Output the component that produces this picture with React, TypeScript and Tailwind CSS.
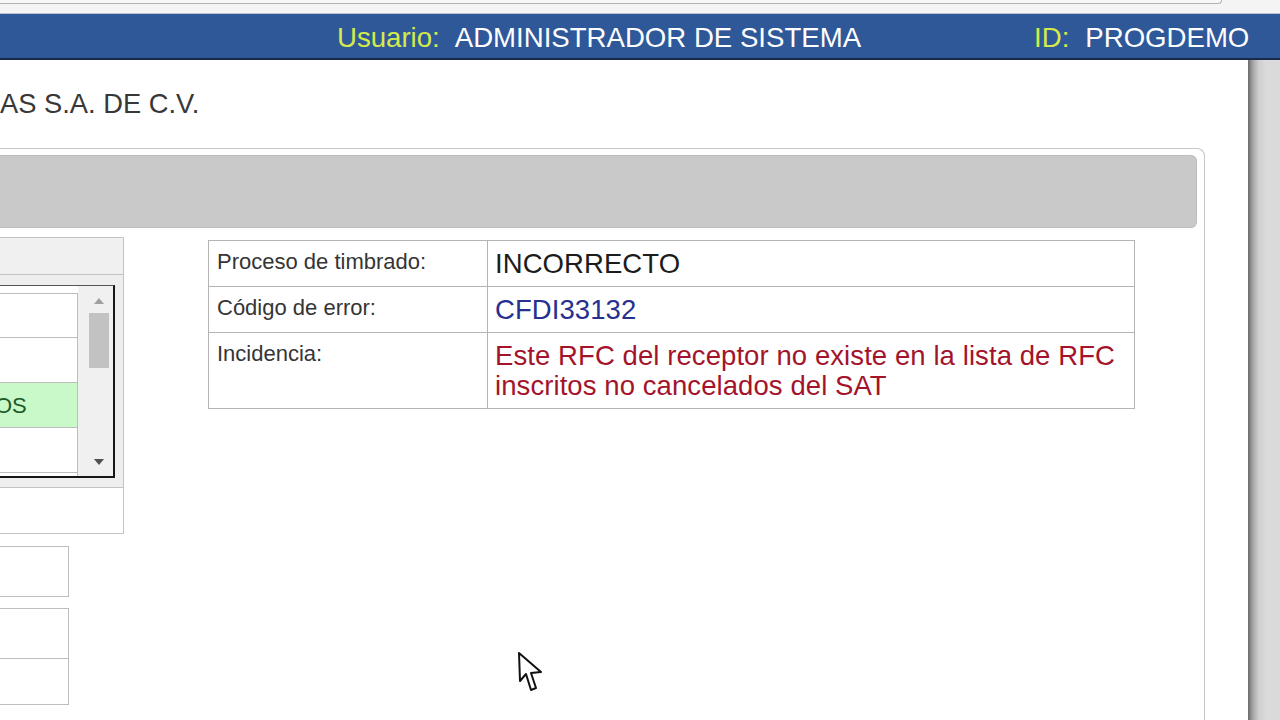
import React from "react";

type Row = { label: string; value: string; tone: string };

const rows: Row[] = [
  { label: "Proceso de timbrado:", value: "INCORRECTO", tone: "text-[#1c1c1c]" },
  { label: "Código de error:", value: "CFDI33132", tone: "text-[#27308f]" },
  {
    label: "Incidencia:",
    value: "Este RFC del receptor no existe en la lista de RFC inscritos no cancelados del SAT",
    tone: "text-[#a3142b]",
  },
];

function ListBox() {
  const items = ["", "", "OS", "", ""];
  return (
    <div className="flex h-[193px] border-t border-r-2 border-b-2 border-t-[#555] border-r-[#161616] border-b-[#161616] bg-white">
      <div className="w-[78px] overflow-hidden pt-[7px]">
        {items.map((it, i) => (
          <div
            key={i}
            className={
              "flex h-[45px] items-center border-r border-b border-[#bdbdbd] text-[22px] text-[#1e5a28] " +
              (i === 0 ? "border-t " : "") +
              (it ? "bg-[#c9f9c9]" : "bg-white")
            }
          >
            {it && <span className="ml-[-5px]">{it}</span>}
          </div>
        ))}
      </div>
      <div className="flex w-[35px] flex-col items-center bg-[#f0f0f0] pt-[11px] pb-[10px]">
        <svg width="12" height="8" viewBox="0 0 12 8" className="ml-[7px]">
          <path d="M6 1 L11 7 L1 7 Z" fill="#a0a0a0" />
        </svg>
        <div className="mt-[8px] ml-[6px] h-[55px] w-[20px] bg-[#c2c2c2]" />
        <div className="flex-1" />
        <svg width="12" height="8" viewBox="0 0 12 8" className="ml-[7px]">
          <path d="M1 1 L11 1 L6 7 Z" fill="#505050" />
        </svg>
      </div>
    </div>
  );
}

export default function App() {
  return (
    <div className="relative h-[720px] w-[1280px] overflow-hidden bg-[#d6d6d6] font-['Liberation_Sans',Arial,sans-serif]">
      {/* browser-ish strip */}
      <div className="h-[14px] border-b border-[#b9c3d4] bg-[#f4f4f4]">
        <div className="h-[4px] w-[1222px] rounded-br-[4px] border-r border-b border-[#b3b3b3] bg-[#f8f8f8]" />
      </div>

      {/* user bar */}
      <div className="flex h-[46px] items-center border-b-2 border-[#172a4c] bg-[#2f5899] pt-[3px] pl-[337px] text-[27.6px] leading-none text-white">
        <span className="text-[#d5ea4a]">Usuario:</span>
        <span className="ml-[15px]">ADMINISTRADOR DE SISTEMA</span>
        <span className="ml-[173px] text-[#d5ea4a]">ID:</span>
        <span className="ml-[16px]">PROGDEMO</span>
      </div>

      <div className="flex h-[660px]">
        <main className="flex w-[1248px] flex-col bg-white">
          <div className="h-[88px] pt-[28px] text-[27.3px] leading-[32px] text-[#383838]">AS S.A. DE C.V.</div>

          <section className="mr-[43px] flex-1 rounded-tr-[8px] border-t border-r border-[#c6c6c6] pt-[6px] pr-[7px]">
            <div className="h-[73px] rounded-r-[6px] border border-l-0 border-[#bcbcbc] bg-[#c9c9c9]" />

            <div className="mt-[9px] flex items-start">
              <div className="w-[124px]">
                <div className="border-t border-r border-b border-[#c4c4c4]">
                  <div className="h-[37px] border-b border-[#c4c4c4] bg-[#f0f0f0]" />
                  <div className="h-[212px] bg-[#eeeeee] pt-[10px] pr-[8px]">
                    <ListBox />
                  </div>
                  <div className="h-[46px] border-t border-[#c4c4c4] bg-white" />
                </div>
                <div className="mt-[12px] h-[51px] w-[69px] border border-l-0 border-[#bdbdbd]" />
                <div className="mt-[11px] w-[69px] border border-l-0 border-[#bdbdbd]">
                  <div className="h-[50px] border-b border-[#bdbdbd]" />
                  <div className="h-[45px]" />
                </div>
              </div>

              <table className="mt-[3px] ml-[84px] w-[927px] border-collapse border border-[#b4b4b4]">
                <tbody>
                  {rows.map((r) => (
                    <tr key={r.label}>
                      <td className="w-[279px] border border-[#b4b4b4] px-[8px] pt-[8px] pb-[7px] align-top text-[22px] leading-[26px] text-[#353535]">
                        {r.label}
                      </td>
                      <td className={"border border-[#b4b4b4] px-[7px] pt-[8px] pb-[7px] align-top text-[27.5px] leading-[30px] tracking-[0.08px] " + r.tone}>
                        {r.value}
                      </td>
                    </tr>
                  ))}
                </tbody>
              </table>
            </div>
          </section>
        </main>
        <div className="flex-1 bg-[linear-gradient(to_right,#6a6a6a,#a8a8a8_5px,#cfcfcf_11px,#dadada_18px)]" />
      </div>

      {/* mouse pointer */}
      <svg className="absolute top-[651px] left-[517px]" width="27" height="42" viewBox="0 0 27 42">
        <path d="M2 2 L3 30 L9 23 L14 39 L19 37 L14 22 L24 21 Z" fill="white" stroke="#111" strokeWidth="2" strokeLinejoin="round" />
      </svg>
    </div>
  );
}
